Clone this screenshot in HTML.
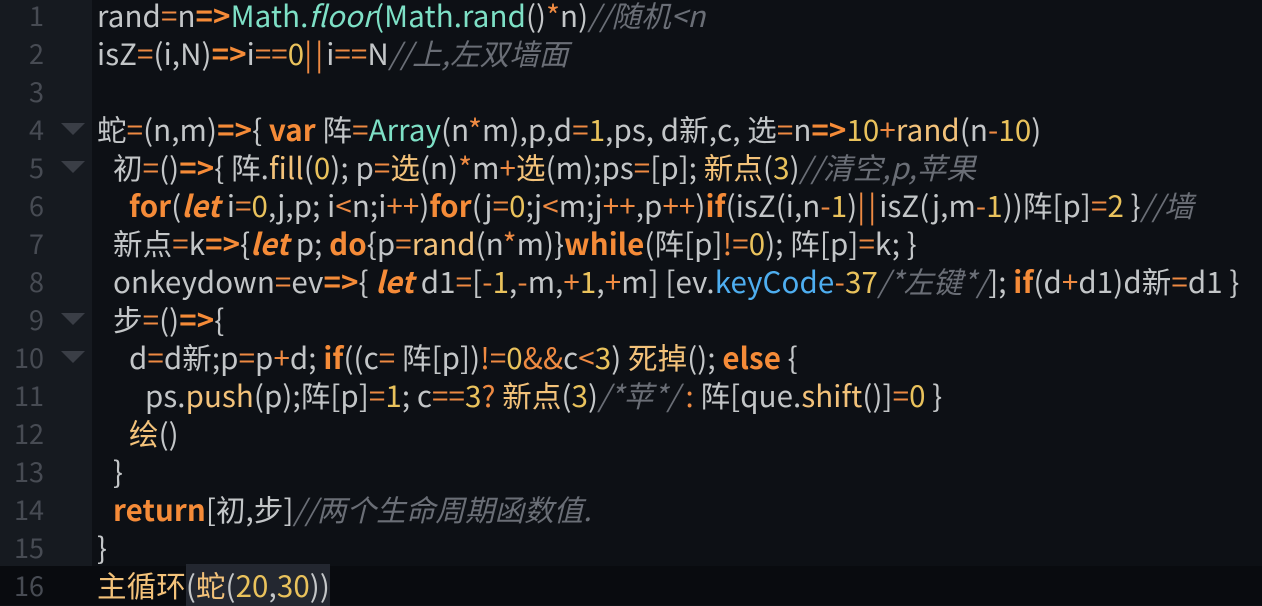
<!DOCTYPE html>
<html><head><meta charset="utf-8"><style>
html,body{margin:0;padding:0;background:#0d1015;width:1262px;height:605px;overflow:hidden}
#g{position:absolute;left:0;top:0;width:92px;height:605px;background:#161a20}
.ln{position:absolute;left:0;width:44px;text-align:right;color:#474b53;font:27px "Noto Sans CJK SC","Liberation Sans",sans-serif;line-height:38px}
.tri{position:absolute;left:61px;width:0;height:0;border-left:12px solid transparent;border-right:12px solid transparent;border-top:12px solid #3a3e46}
.l{position:absolute;left:97px;white-space:pre;color:#c3c6c8;font:29.5px "Noto Sans CJK SC","Liberation Sans",sans-serif;line-height:38px;letter-spacing:0.1px}
.cur{position:absolute;left:0;top:566px;width:1262px;height:39px;background:#090b0f}
.sel{background:#232730}
.k{color:#f58b38;font-weight:bold}
.o{color:#ee8a42}
.f{color:#f3c27a}
.n{color:#e9c25c}
.c{color:#7ee0c6}
.m{color:#6a6e76;font-style:italic}
.p{color:#4eaef0}
.bar{color:#ee8a42;letter-spacing:3px}
</style></head><body>
<div id="g"></div>
<div class="cur"></div>
<div class="ln" style="top:-4px">1</div>
<div class="ln" style="top:34px">2</div>
<div class="ln" style="top:72px">3</div>
<div class="ln" style="top:110px">4</div>
<div class="ln" style="top:148px">5</div>
<div class="ln" style="top:186px">6</div>
<div class="ln" style="top:224px">7</div>
<div class="ln" style="top:262px">8</div>
<div class="ln" style="top:300px">9</div>
<div class="ln" style="top:338px">10</div>
<div class="ln" style="top:376px">11</div>
<div class="ln" style="top:414px">12</div>
<div class="ln" style="top:452px">13</div>
<div class="ln" style="top:490px">14</div>
<div class="ln" style="top:528px">15</div>
<div class="ln" style="top:566px">16</div>
<div class="tri" style="top:123px"></div>
<div class="tri" style="top:161px"></div>
<div class="tri" style="top:313px"></div>
<div class="tri" style="top:351px"></div>

<div class="l" style="top:-4px">rand<span class="o">=</span>n<span class="k">=&gt;</span><span class="c">Math.<i>floor</i>(Math.rand</span>()<span class="o">*</span>n)<span class="m">//随机&lt;n</span></div>
<div class="l" style="top:34px">isZ<span class="o">=</span>(i,N)<span class="k">=&gt;</span>i<span class="o">==</span><span class="n">0</span><span class="bar">||</span>i<span class="o">==</span>N<span class="m">//上,左双墙面</span></div>
<div class="l" style="top:110px">蛇<span class="o">=</span>(n,m)<span class="k">=&gt;</span>{ <span class="k">var</span> 阵<span class="o">=</span><span class="c">Array</span>(n<span class="o">*</span>m),p,d<span class="o">=</span><span class="n">1</span>,ps, d新,c, 选<span class="o">=</span>n<span class="k">=&gt;</span><span class="n">10</span><span class="o">+</span><span class="f">rand</span>(n<span class="o">-</span><span class="n">10</span>)</div>
<div class="l" style="top:148px;left:113px">初<span class="o">=</span>()<span class="k">=&gt;</span>{ 阵.<span class="f">fill</span>(<span class="n">0</span>); p<span class="o">=</span><span class="f">选</span>(n)<span class="o">*</span>m<span class="o">+</span><span class="f">选</span>(m);ps<span class="o">=</span>[p]; <span class="f">新点</span>(<span class="n">3</span>)<span class="m">//清空,p,苹果</span></div>
<div class="l" style="top:186px;left:129px"><span class="k">for</span>(<span class="k"><i>let</i></span> i<span class="o">=</span><span class="n">0</span>,j,p; i<span class="o">&lt;</span>n;i<span class="o">++</span>)<span class="k">for</span>(j<span class="o">=</span><span class="n">0</span>;j<span class="o">&lt;</span>m;j<span class="o">++</span>,p<span class="o">++</span>)<span class="k">if</span>(isZ(i,n<span class="o">-</span><span class="n">1</span>)<span class="bar">||</span>isZ(j,m<span class="o">-</span><span class="n">1</span>))阵[p]<span class="o">=</span><span class="n">2</span> }<span class="m">//墙</span></div>
<div class="l" style="top:224px;left:113px">新点<span class="o">=</span>k<span class="k">=&gt;</span>{<span class="k"><i>let</i></span> p; <span class="k">do</span>{p<span class="o">=</span><span class="f">rand</span>(n<span class="o">*</span>m)}<span class="k">while</span>(阵[p]<span class="o">!=</span><span class="n">0</span>); 阵[p]<span class="o">=</span>k; }</div>
<div class="l" style="top:262px;left:113px">onkeydown<span class="o">=</span>ev<span class="k">=&gt;</span>{ <span class="k"><i>let</i></span> d1<span class="o">=</span>[<span class="o">-</span><span class="n">1</span>,<span class="o">-</span>m,<span class="o">+</span><span class="n">1</span>,<span class="o">+</span>m] [ev.<span class="p">keyCode</span><span class="o">-</span><span class="n">37</span><span class="m">/*左键*/</span>]; <span class="k">if</span>(d<span class="o">+</span>d1)d新<span class="o">=</span>d1 }</div>
<div class="l" style="top:300px;left:113px">步<span class="o">=</span>()<span class="k">=&gt;</span>{</div>
<div class="l" style="top:338px;left:129px">d<span class="o">=</span>d新;p<span class="o">=</span>p<span class="o">+</span>d; <span class="k">if</span>((c<span class="o">=</span> 阵[p])<span class="o">!=</span><span class="n">0</span><span class="o">&amp;&amp;</span>c<span class="o">&lt;</span><span class="n">3</span>) <span class="f">死掉</span>(); <span class="k">else</span> {</div>
<div class="l" style="top:376px;left:145px">ps.<span class="f">push</span>(p);阵[p]<span class="o">=</span><span class="n">1</span>; c<span class="o">==</span><span class="n">3</span><span class="o">?</span> <span class="f">新点</span>(<span class="n">3</span>)<span class="m">/*苹*/</span> <span class="o">:</span> 阵[que.<span class="f">shift</span>()]<span class="o">=</span><span class="n">0</span> }</div>
<div class="l" style="top:414px;left:129px"><span class="f">绘</span>()</div>
<div class="l" style="top:452px;left:113px">}</div>
<div class="l" style="top:490px;left:113px"><span class="k">return</span>[初,步]<span class="m">//两个生命周期函数值.</span></div>
<div class="l" style="top:528px">}</div>
<div class="l" style="top:566px"><span class="f">主循环</span><span class="sel">(<span class="f">蛇</span>(<span class="n">20</span>,<span class="n">30</span>))</span></div>
</body></html>
